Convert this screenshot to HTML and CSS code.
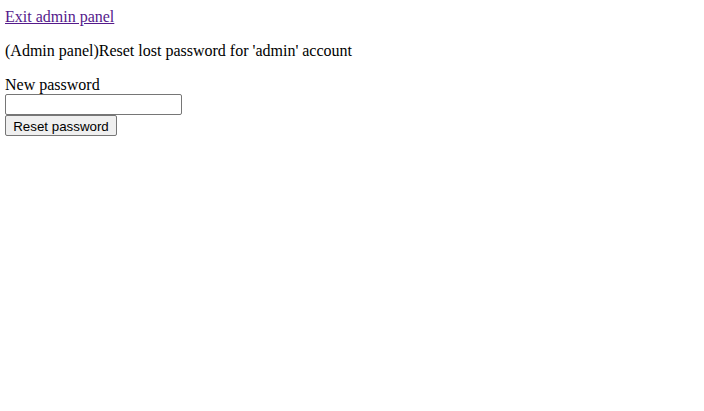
FILE: index.html
```html
<!DOCTYPE html>
<html>
<head>
<meta charset="utf-8">
<link rel="stylesheet" href="styles.css">
</head>
<body class="page">
<a class="exit" href="#">Exit admin panel</a>
<p class="title">(Admin panel)Reset lost password for 'admin' account</p>
<form class="form">
<label class="label">New password</label><br>
<input class="field" type="password"><br>
<button class="btn" type="button">Reset password</button>
</form>
</body>
</html>
```
FILE: styles.css
```css
.page {
  margin: 8px 5px;
  font-family: "Liberation Serif", "Times New Roman", serif;
  font-size: 16px;
  color: #000;
  background: #fff;
}
.exit {
  color: #551a8b;
}
.title {
  margin: 16px 0;
}
.form {
  margin: 0;
}
.field {
  box-sizing: border-box;
  width: 177px;
  height: 21px;
  margin: 0;
  padding: 1px 2px;
  border: 1px solid #767676;
  border-radius: 2px;
  font-family: "Liberation Sans", Arial, sans-serif;
  font-size: 13.33px;
  vertical-align: bottom;
}
.btn {
  box-sizing: border-box;
  width: 112px;
  height: 21px;
  margin: 0;
  padding: 2px 0 0;
  border: 1px solid #767676;
  border-radius: 2px;
  background: #efefef;
  font-family: "Liberation Sans", Arial, sans-serif;
  font-size: 13.33px;
  color: #000;
  white-space: nowrap;
  text-align: center;
  vertical-align: bottom;
}
```
